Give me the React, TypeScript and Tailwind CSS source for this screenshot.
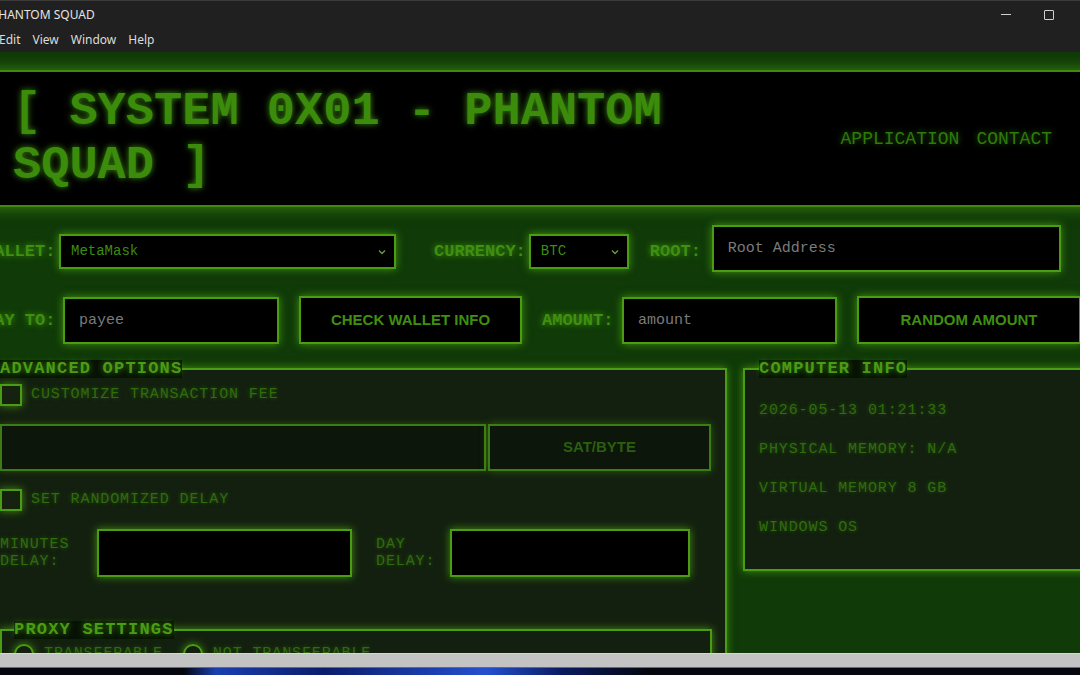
import React from 'react';

const mono = "font-['Liberation_Mono','Courier_New',monospace]";
const sans = "font-['Liberation_Sans',Arial,sans-serif]";
const glowBox = "border-2 border-[#4a9c12] shadow-[0_0_8px_rgba(90,190,20,0.7)]";
const glowText = "[text-shadow:0_0_6px_rgba(80,180,20,0.75)]";

const Label: React.FC<{ children: React.ReactNode; className?: string }> = ({ children, className = '' }) => (
  <span className={`${mono} ${glowText} text-[17px] font-bold text-[#3f8f10] whitespace-nowrap ${className}`}>{children}</span>
);

const FakeSelect: React.FC<{ value: string; className?: string }> = ({ value, className = '' }) => (
  <div className={`${glowBox} bg-black h-[35px] flex items-center justify-between pl-[10px] pr-[7px] ${className}`}>
    <span className={`${mono} text-[14px] text-[#3c8c10]`}>{value}</span>
    <svg width="10" height="10" viewBox="0 0 10 10" fill="none">
      <path d="M2 3.5 L5 6.5 L8 3.5" stroke="#6aa040" strokeWidth="1.3" />
    </svg>
  </div>
);

const TextBox: React.FC<{ placeholder?: string; className?: string }> = ({ placeholder, className = '' }) => (
  <input
    placeholder={placeholder}
    className={`${glowBox} ${mono} bg-black text-[15px] px-[14px] text-[#3c8c10] placeholder:text-[#7b7b7b] outline-none ${className}`}
  />
);

const GlowButton: React.FC<{ children: React.ReactNode; className?: string }> = ({ children, className = '' }) => (
  <button className={`${glowBox} ${sans} bg-black text-[15px] font-bold text-[#3f8f10] ${className}`}>{children}</button>
);

const Legend: React.FC<{ children: React.ReactNode }> = ({ children }) => (
  <legend className={`${mono} ${glowText} text-[17px] leading-[18px] font-bold tracking-[1.2px] text-[#4a9c14] bg-[#071204] px-0`}>
    {children}
  </legend>
);

const Dim: React.FC<{ children: React.ReactNode; className?: string }> = ({ children, className = '' }) => (
  <span className={`${mono} text-[15px] tracking-[0.9px] text-[#2f6c0c] [text-shadow:0_0_4px_rgba(60,140,15,0.5)] ${className}`}>{children}</span>
);

const Check: React.FC<{ label: string; className?: string }> = ({ label, className = '' }) => (
  <div className={`flex items-center gap-[9px] h-[22px] ${className}`}>
    <div className={`w-[22px] h-[22px] ${glowBox} bg-[#14220f]`} />
    <Dim className="mt-[1px]">{label}</Dim>
  </div>
);

export default function App() {
  return (
    <div className="w-[1080px] h-[675px] overflow-hidden bg-[#05070f] flex flex-col">
      {/* title bar */}
      <div className="h-[28px] shrink-0 bg-[#202020] border-t border-[#3a3a3a] flex items-center justify-between font-['Noto_Sans',sans-serif] text-[12px] text-[#e4e4e4]">
        <span className="ml-[-9px]">PHANTOM SQUAD</span>
        <div className="flex items-center pr-[10px]">
          <div className="w-[43px] h-[27px] flex items-center justify-center">
            <div className="w-[10px] h-px bg-[#d0d0d0]" />
          </div>
          <div className="w-[43px] h-[27px] flex items-center justify-center">
            <div className="w-[10px] h-[10px] border border-[#d0d0d0] rounded-[1px]" />
          </div>
        </div>
      </div>

      {/* menu bar */}
      <div className="h-[24px] shrink-0 bg-[#202020] flex items-center gap-[12px] font-['Noto_Sans',sans-serif] text-[12px] text-[#dcdcdc]">
        <span className="ml-[-1px]">Edit</span>
        <span>View</span>
        <span>Window</span>
        <span>Help</span>
      </div>

      {/* app */}
      <div className="h-[601px] shrink-0 overflow-hidden bg-[#103a08]">
        <div className="ml-[-16px] w-[1112px]">
          {/* header */}
          <header className="mt-[18px] bg-black border-y-2 border-[#3f8a0e] shadow-[0_0_14px_rgba(80,170,20,0.7)] flex items-center justify-between pl-[29px] pr-[44px] pt-[13px] pb-[12px]">
            <h1 className={`${mono} ${glowText} w-[700px] text-[47px] leading-[54px] font-bold text-[#3b8c0b]`}>
              [ SYSTEM 0X01 - PHANTOM SQUAD ]
            </h1>
            <nav className={`${mono} flex gap-[17px] text-[18px] text-[#2f7a0c] [text-shadow:0_0_6px_rgba(70,160,20,0.6)]`}>
              <span>APPLICATION</span>
              <span>CONTACT</span>
            </nav>
          </header>

          {/* row 1 */}
          <div className="mt-[18px] h-[47px] flex items-center">
            <Label className="w-[71px] mt-[6px]">WALLET:</Label>
            <FakeSelect value="MetaMask" className="ml-[4px] w-[337px] mt-[6px]" />
            <Label className="ml-[38px] mt-[6px]">CURRENCY:</Label>
            <FakeSelect value="BTC" className="ml-[3px] w-[100px] mt-[6px]" />
            <Label className="ml-[21px] mt-[6px]">ROOT:</Label>
            <TextBox placeholder="Root Address" className="ml-[11px] w-[349px] h-[47px]" />
          </div>

          {/* row 2 */}
          <div className="mt-[24px] h-[48px] flex items-center">
            <Label className="w-[71px] mt-[2px]">PAY TO:</Label>
            <TextBox placeholder="payee" className="ml-[8px] w-[216px] h-[47px]" />
            <GlowButton className="ml-[20px] w-[223px] h-[48px]">CHECK WALLET INFO</GlowButton>
            <Label className="ml-[20px] w-[72px] mt-[2px]">AMOUNT:</Label>
            <TextBox placeholder="amount" className="ml-[8px] w-[215px] h-[47px]" />
            <GlowButton className="ml-[20px] w-[224px] h-[48px]">RANDOM AMOUNT</GlowButton>
          </div>

          {/* panels */}
          <div className="mt-[16px] flex items-start gap-[16px]">
            <fieldset className={`w-[743px] min-w-0 ${glowBox} bg-[#13200f] px-[14px] pt-[6px] pb-[20px]`}>
              <Legend>ADVANCED OPTIONS</Legend>
              <Check label="CUSTOMIZE TRANSACTION FEE" />

              <div className="mt-[18px] h-[47px] flex">
                <div className="w-[486px] h-[47px] bg-[#0c160a] border-2 border-[#3c7c12] shadow-[0_0_6px_rgba(80,170,20,0.35)]" />
                <button className={`ml-[2px] w-[223px] h-[47px] bg-[#0c160a] border-2 border-[#3c7c12] shadow-[0_0_8px_rgba(80,170,20,0.45)] ${sans} text-[15px] font-bold text-[#2b5e0d]`}>
                  SAT/BYTE
                </button>
              </div>

              <Check label="SET RANDOMIZED DELAY" className="mt-[18px]" />

              <div className="mt-[18px] h-[48px] flex items-center">
                <Dim className="w-[97px] leading-[17px] tracking-[0.6px]">MINUTES<br />DELAY:</Dim>
                <div className={`w-[255px] h-[48px] bg-black ${glowBox}`} />
                <Dim className="ml-[24px] w-[74px] leading-[17px] tracking-[0.6px]">DAY<br />DELAY:</Dim>
                <div className={`w-[240px] h-[48px] bg-black ${glowBox}`} />
              </div>

              <fieldset className={`mt-[44px] w-[712px] min-w-0 ${glowBox} px-[12px] pt-[5px] pb-[20px]`}>
                <Legend>PROXY SETTINGS</Legend>
                <div className="flex items-center h-[20px]">
                  <div className={`w-[20px] h-[20px] rounded-full ${glowBox}`} />
                  <Dim className="ml-[10px]">TRANSFERABLE</Dim>
                  <div className={`ml-[20px] w-[20px] h-[20px] rounded-full ${glowBox}`} />
                  <Dim className="ml-[10px]">NOT TRANSFERABLE</Dim>
                </div>
                <div className="h-[40px]" />
              </fieldset>
              <div className="h-[60px]" />
            </fieldset>

            <fieldset className={`w-[353px] min-w-0 ${glowBox} bg-[#13200f] px-[14px] pt-[23px] pb-[31px]`}>
              <Legend>COMPUTER INFO</Legend>
              <div className="flex flex-col gap-[19px]">
                <Dim className="leading-[20px]">2026-05-13 01:21:33</Dim>
                <Dim className="leading-[20px]">PHYSICAL MEMORY: N/A</Dim>
                <Dim className="leading-[20px]">VIRTUAL MEMORY 8 GB</Dim>
                <Dim className="leading-[20px]">WINDOWS OS</Dim>
              </div>
            </fieldset>
          </div>
        </div>
      </div>

      {/* bottom scrollbar strip */}
      <div className="h-[15px] shrink-0 bg-[#c3c3c3] border-t border-[#d6d6d6] border-b border-b-[#6a6a6a]" />
      <div className="h-[7px] shrink-0 bg-[linear-gradient(90deg,#05070f_0%,#05070f_17%,#1a3fb0_20%,#0b1c6a_30%,#2450d0_45%,#0a1a60_52%,#05070f_60%,#05070f_100%)]" />
    </div>
  );
}
